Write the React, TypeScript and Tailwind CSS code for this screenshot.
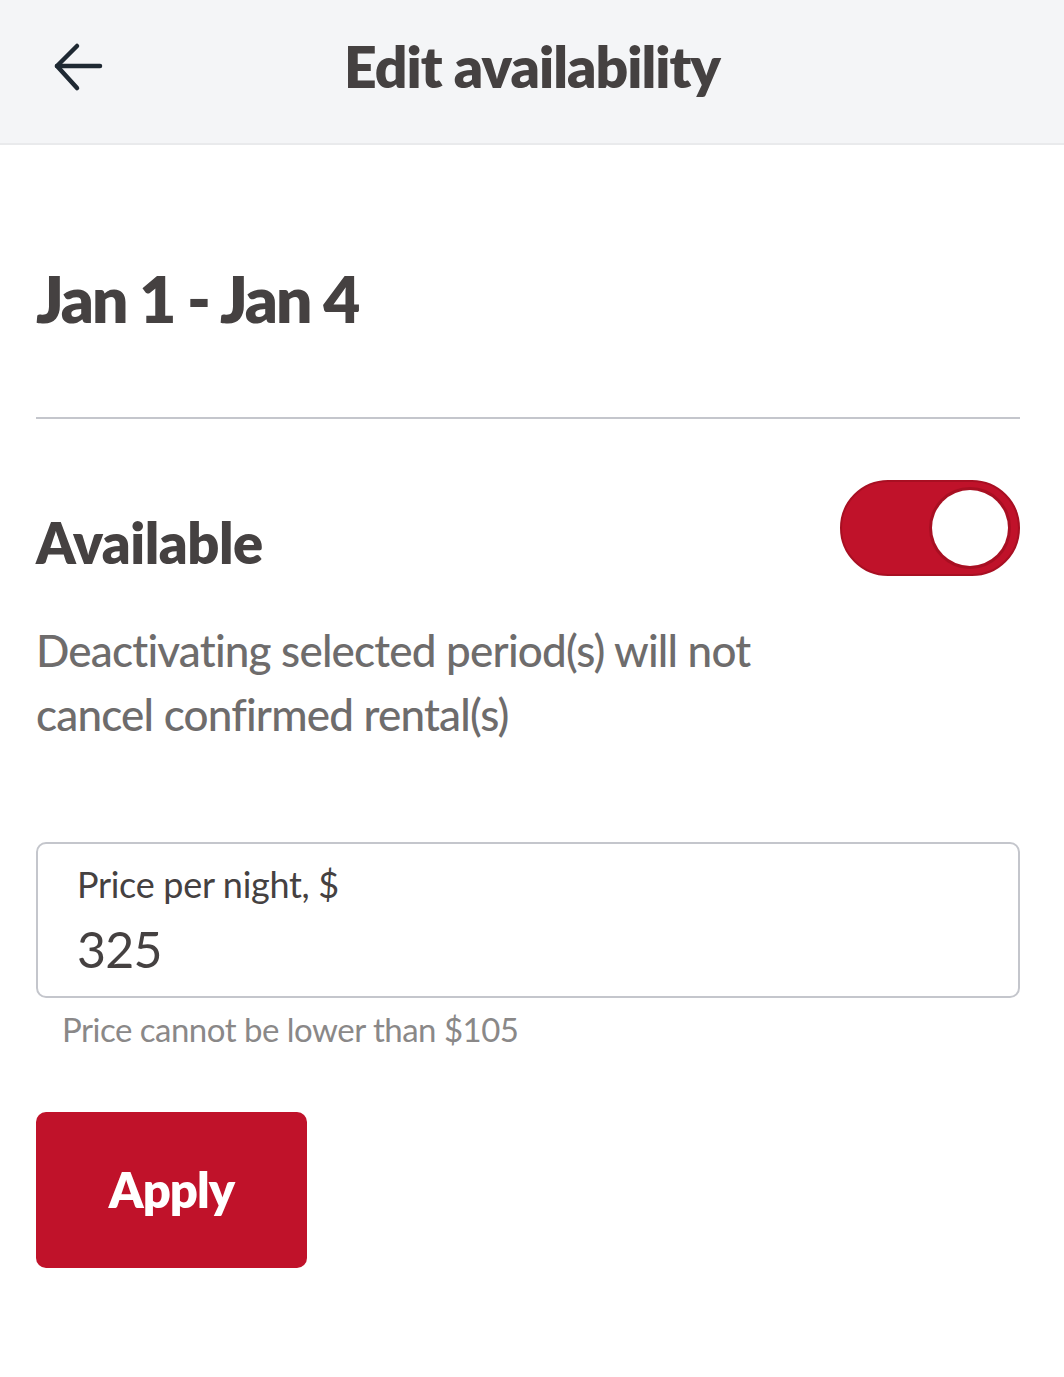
import React from "react";

export default function App() {
  return (
    <div className="min-h-[1377px] w-full bg-white" style={{ fontFamily: "Lato, 'Noto Sans', sans-serif" }}>
      <header className="relative flex h-[145px] items-center justify-center border-b-2 border-[#e9eaec] bg-[#f4f5f7] pb-[10px]">
        <button className="absolute left-[52px] top-[42px] flex h-[52px] w-[52px] items-center justify-center">
          <svg width="52" height="52" viewBox="0 0 52 52" fill="none" stroke="#1f2933" strokeWidth="4.5" strokeLinecap="round" strokeLinejoin="round">
            <path d="M48 24H5" />
            <path d="M25 4L5 24L25 46" />
          </svg>
        </button>
        <h1 className="text-[57px] font-extrabold leading-none tracking-[-1px] text-[#454141]">Edit availability</h1>
      </header>

      <main className="pl-[36px] pr-[44px]">
        <h2 className="pt-[122px] text-[64px] font-extrabold leading-none tracking-[-2px] text-[#454141]">Jan 1 - Jan 4</h2>
        <div className="mt-[86px] h-[2px] w-full bg-[#c4c6cc]" />

        <div className="mt-[61px] flex items-start justify-between">
          <div className="pt-[35px] text-[56px] font-extrabold leading-none tracking-[-0.5px] text-[#454141]">Available</div>
          <div className="relative h-[96px] w-[180px] rounded-full border-2 border-[#a80f22] bg-[#c0122a]">
            <div className="absolute right-[10px] top-[8px] h-[76px] w-[76px] rounded-full bg-white shadow-[0_0_0_3px_#a80f22]" />
          </div>
        </div>

        <p className="mt-[42px] max-w-[780px] text-[44px] font-medium leading-[64px] tracking-[-0.8px] text-[#6e6c6c]">
          Deactivating selected period(s) will not cancel confirmed rental(s)
        </p>

        <div className="mt-[96px] rounded-[10px] border-2 border-[#c4c6cc] px-[39px] pb-[20px] pt-[20px]">
          <div className="text-[36px] leading-[40px] tracking-[-0.3px] text-[#454141]">Price per night, $</div>
          <div className="mt-[18px] text-[50px] leading-[54px] tracking-[-0.8px] text-[#454141]">325</div>
        </div>
        <p className="ml-[26px] mt-[11px] text-[33px] leading-[40px] tracking-[-0.5px] text-[#8a8888]">Price cannot be lower than $105</p>

        <button className="mt-[63px] flex h-[156px] w-[271px] items-center justify-center rounded-[10px] bg-[#c0122a] text-[49px] font-extrabold tracking-[-1px] text-white">
          Apply
        </button>
      </main>
    </div>
  );
}
